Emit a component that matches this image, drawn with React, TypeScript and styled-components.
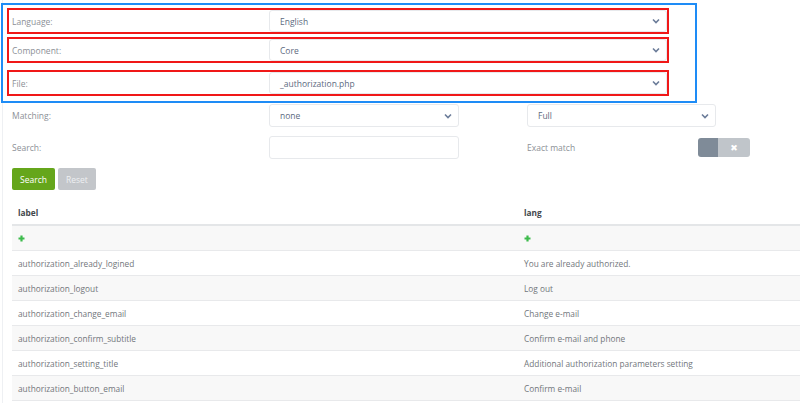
import React from "react";
import styled, { createGlobalStyle } from "styled-components";

const GlobalStyle = createGlobalStyle`
	html, body {
		margin: 0;
		padding: 0;
		background: #ffffff;
		font-family: "Open Sans", "Liberation Sans", sans-serif;
	}
`;

const rows = [
	{ label: "authorization_already_logined", lang: "You are already authorized." },
	{ label: "authorization_logout", lang: "Log out" },
	{ label: "authorization_change_email", lang: "Change e-mail" },
	{ label: "authorization_confirm_subtitle", lang: "Confirm e-mail and phone" },
	{ label: "authorization_setting_title", lang: "Additional authorization parameters setting" },
	{ label: "authorization_button_email", lang: "Confirm e-mail" },
];

const Chevron = () => (
	<svg width="8" height="6" viewBox="0 0 8 6">
		<path d="M1 1.5 L4 4.5 L7 1.5" fill="none" stroke="#6b7c99" strokeWidth="1.6" />
	</svg>
);

const Plus = () => (
	<svg width="7" height="7" viewBox="0 0 7 7">
		<path d="M3.5 0.5 V6.5 M0.5 3.5 H6.5" stroke="#3dbb4c" strokeWidth="2.2" />
	</svg>
);

const Select = ({ value, width }: { value: string; width?: number }) => (
	<SelectBox $width={width}>
		<span>{value}</span>
		<Chevron />
	</SelectBox>
);

const App = (): JSX.Element => {
	return (
		<Page>
			<GlobalStyle />
			<Highlight>
				<Marked>
					<Label>Language:</Label>
					<Select value="English" />
				</Marked>
				<Marked $top={3}>
					<Label>Component:</Label>
					<Select value="Core" />
				</Marked>
				<Marked $top={7}>
					<Label>File:</Label>
					<Select value="_authorization.php" />
				</Marked>
			</Highlight>

			<FormRow $top={1}>
				<Label>Matching:</Label>
				<Select value="none" width={190} />
				<Side>
					<Select value="Full" width={189} />
				</Side>
			</FormRow>
			<FormRow $top={9}>
				<Label>Search:</Label>
				<Input />
				<Side>
					<SideLabel>Exact match</SideLabel>
					<Toggle>
						<span className="knob" />
						<span className="off">✖</span>
					</Toggle>
				</Side>
			</FormRow>

			<Buttons>
				<Button $variant="primary">Search</Button>
				<Button $variant="muted">Reset</Button>
			</Buttons>

			<Table>
				<colgroup>
					<col style={{ width: 506 }} />
					<col />
				</colgroup>
				<thead>
					<tr>
						<th>label</th>
						<th>lang</th>
					</tr>
				</thead>
				<tbody>
					<tr>
						<td>
							<Plus />
						</td>
						<td>
							<Plus />
						</td>
					</tr>
					{rows.map((row) => (
						<tr key={row.label}>
							<td>{row.label}</td>
							<td>{row.lang}</td>
						</tr>
					))}
				</tbody>
			</Table>
		</Page>
	);
};

const Page = styled.div`
	width: 800px;
	height: 403px;
	overflow: hidden;
	box-sizing: border-box;
	padding-top: 3px;
	position: relative;
	&::before {
		content: "";
		position: absolute;
		left: 2px;
		top: 0;
		bottom: 0;
		width: 1px;
		background: #eef0f3;
	}
`;

const Highlight = styled.div`
	position: relative;
	margin-left: 1px;
	width: 696px;
	box-sizing: border-box;
	border: 2px solid #1e8cf6;
	padding: 3px 0 5px 4px;
	background: #fff;
`;

const Marked = styled.div<{ $top?: number }>`
	display: flex;
	align-items: center;
	width: 662px;
	height: 26px;
	box-sizing: border-box;
	border: 2px solid #f01818;
	margin-top: ${(p) => p.$top ?? 0}px;
	padding-left: 3px;
`;

const FormRow = styled.div<{ $top?: number }>`
	display: flex;
	align-items: center;
	height: 23px;
	margin-top: ${(p) => p.$top ?? 0}px;
	padding-left: 12px;
`;

const Label = styled.div`
	width: 257px;
	flex-shrink: 0;
	font-size: 8.5px;
	color: #8c9096;
`;

const Side = styled.div`
	display: flex;
	align-items: center;
	justify-content: space-between;
	width: 223px;
	margin-left: 68px;
`;

const SideLabel = styled.div`
	font-size: 8.5px;
	color: #8c9096;
`;

const SelectBox = styled.div<{ $width?: number }>`
	display: flex;
	align-items: center;
	justify-content: space-between;
	box-sizing: border-box;
	${(p) => (p.$width ? `width: ${p.$width}px; height: 23px;` : "flex: 1; height: 22px;")}
	border: 1px solid #e7e9ec;
	border-radius: 3px;
	background: #fff;
	padding: 0 6px 0 10px;
	font-size: 8.5px;
	color: #5d6a80;
`;

const Input = styled.div`
	width: 190px;
	height: 23px;
	box-sizing: border-box;
	border: 1px solid #e7e9ec;
	border-radius: 3px;
	background: #fff;
`;

const Toggle = styled.div`
	display: flex;
	width: 52px;
	height: 19px;
	border-radius: 3px;
	overflow: hidden;
	.knob {
		width: 20px;
		background: #7f8b98;
	}
	.off {
		flex: 1;
		background: #c0c5ca;
		color: #fff;
		font-size: 9px;
		display: flex;
		align-items: center;
		justify-content: center;
		font-family: "DejaVu Sans", sans-serif;
	}
`;

const Buttons = styled.div`
	display: flex;
	gap: 3px;
	margin-top: 9px;
	padding-left: 12px;
`;

const Button = styled.div<{ $variant: "primary" | "muted" }>`
	height: 22px;
	display: flex;
	align-items: center;
	padding: 0 8px;
	border-radius: 2px;
	font-size: 8.5px;
	color: ${(p) => (p.$variant === "primary" ? "#ffffff" : "#eef0f2")};
	background: ${(p) => (p.$variant === "primary" ? "#65a61b" : "#c3c6ca")};
`;

const Table = styled.table`
	margin-left: 12px;
	margin-top: 10px;
	width: 800px;
	border-collapse: collapse;
	table-layout: fixed;
	font-size: 8.3px;
	color: #72767b;
	th {
		text-align: left;
		font-weight: 700;
		color: #44474c;
		height: 24px;
		padding: 0 6px;
		border-bottom: 2px solid #e4e6e8;
	}
	td {
		height: 24px;
		padding: 0 6px;
		border-bottom: 1px solid #e8e9eb;
	}
	tbody tr:nth-child(odd) td {
		background: #f8f8f8;
	}
`;

export default App;
